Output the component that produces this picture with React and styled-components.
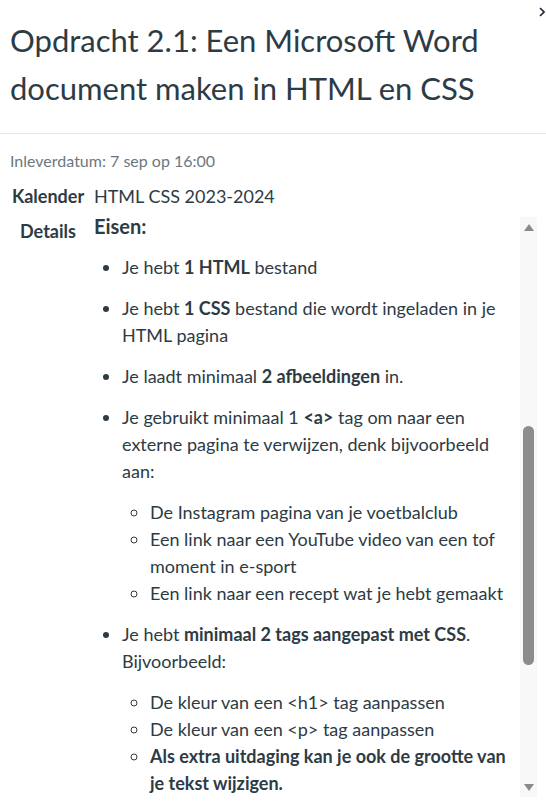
import styled, { createGlobalStyle } from "styled-components";

const GlobalStyle = createGlobalStyle`
  html, body {
    margin: 0;
    padding: 0;
    background: #ffffff;
  }
  body {
    font-family: Lato, "Noto Sans", "Liberation Sans", sans-serif;
    color: #2d3b45;
  }
`;

const Page = styled.div`
  height: 100vh;
  display: flex;
  flex-direction: column;
  overflow: hidden;
  padding-bottom: 4px;
  box-sizing: border-box;
`;

const Header = styled.header`
  display: flex;
  align-items: flex-start;
  padding: 16px 1px 21px 10px;
  border-bottom: 1px solid #e6e6e6;
`;

const Title = styled.h1`
  flex: 1;
  margin: 0;
  font-size: 31px;
  line-height: 48px;
  font-weight: 400;
  color: #2d3b45;
`;

const Chevron = styled.svg`
  flex: none;
  margin-top: -9px;
`;

const DueDate = styled.div`
  margin: 15px 0 0 10px;
  font-size: 16px;
  line-height: 24px;
  color: #6b7780;
`;

const InfoRow = styled.div`
  display: grid;
  grid-template-columns: 80px 1fr;
  column-gap: 6px;
  padding-left: 8px;
  margin-top: ${(p) => p.$top}px;
  ${(p) => p.$grow && "flex: 1; min-height: 0;"}
`;

const Label = styled.div`
  padding-top: ${(p) => p.$drop || 0}px;
  font-size: 18px;
  line-height: 27px;
  font-weight: 700;
  text-align: center;
  color: #2d3b45;
`;

const Value = styled.div`
  font-size: 18px;
  line-height: 27px;
`;

const DetailsBox = styled.div`
  display: flex;
  min-height: 0;
  padding-right: 9px;
`;

const Scroller = styled.div`
  flex: 1;
  overflow: hidden;
  padding-right: 5px;
  font-size: 18px;
  line-height: 27px;
`;

const Heading = styled.h3`
  margin: 0 0 17px;
  font-size: 20px;
  line-height: 22px;
  font-weight: 700;
`;

const List = styled.ul`
  margin: 0;
  padding-left: 28px;
  list-style-type: ${(p) => (p.$nested ? "circle" : "disc")};
`;

const Para = styled.p`
  margin: 14px 0;
`;

const Track = styled.div`
  flex: none;
  width: 17px;
  margin-top: 2px;
  background: #f8f8f8;
  display: flex;
  flex-direction: column;
`;

const ArrowButton = styled.div`
  height: 20px;
  display: flex;
  align-items: center;
  justify-content: center;
  flex: none;
  &::after {
    content: "";
    width: 0;
    height: 0;
    border-left: 5px solid transparent;
    border-right: 5px solid transparent;
    ${(p) =>
      p.$down
        ? "border-top: 7px solid #8a8a8a;"
        : "border-bottom: 7px solid #8a8a8a;"}
  }
`;

const Trough = styled.div`
  flex: 1;
  display: flex;
  justify-content: center;
`;

const Thumb = styled.div`
  width: 11px;
  height: 239px;
  margin-top: 189px;
  border-radius: 6px;
  background: #8c8c8c;
`;

export default function App() {
  return (
    <>
      <GlobalStyle />
      <Page>
        <Header>
          <Title>Opdracht 2.1: Een Microsoft Word document maken in HTML en CSS</Title>
          <Chevron width="6" height="10" viewBox="0 0 6 10">
            <polyline points="1,1 5,5 1,9" fill="none" stroke="#1b2733" strokeWidth="1.6" />
          </Chevron>
        </Header>

        <DueDate>Inleverdatum: 7 sep op 16:00</DueDate>

        <InfoRow $top={10}>
          <Label>Kalender</Label>
          <Value>HTML CSS 2023-2024</Value>
        </InfoRow>

        <InfoRow $top={5} $grow>
          <Label $drop={3}>Details</Label>
          <DetailsBox>
            <Scroller>
              <Heading>Eisen:</Heading>
              <List>
                <li>
                  <Para>Je hebt <strong>1 HTML</strong> bestand</Para>
                </li>
                <li>
                  <Para>Je hebt <strong>1 CSS</strong> bestand die wordt ingeladen in je HTML pagina</Para>
                </li>
                <li>
                  <Para>Je laadt minimaal <strong>2 afbeeldingen</strong> in.</Para>
                </li>
                <li>
                  <Para>
                    Je gebruikt minimaal 1 <strong>&lt;a&gt;</strong> tag om naar een externe pagina te verwijzen, denk bijvoorbeeld aan:
                  </Para>
                  <List $nested>
                    <li>De Instagram pagina van je voetbalclub</li>
                    <li>Een link naar een YouTube video van een tof moment in e-sport</li>
                    <li>Een link naar een recept wat je hebt gemaakt</li>
                  </List>
                </li>
                <li>
                  <Para>
                    Je hebt <strong>minimaal 2 tags aangepast met CSS</strong>. Bijvoorbeeld:
                  </Para>
                  <List $nested>
                    <li>De kleur van een &lt;h1&gt; tag aanpassen</li>
                    <li>De kleur van een &lt;p&gt; tag aanpassen</li>
                    <li>
                      <strong>Als extra uitdaging kan je ook de grootte van je tekst wijzigen.</strong>
                    </li>
                  </List>
                </li>
              </List>
            </Scroller>
            <Track>
              <ArrowButton />
              <Trough>
                <Thumb />
              </Trough>
              <ArrowButton $down />
            </Track>
          </DetailsBox>
        </InfoRow>
      </Page>
    </>
  );
}
